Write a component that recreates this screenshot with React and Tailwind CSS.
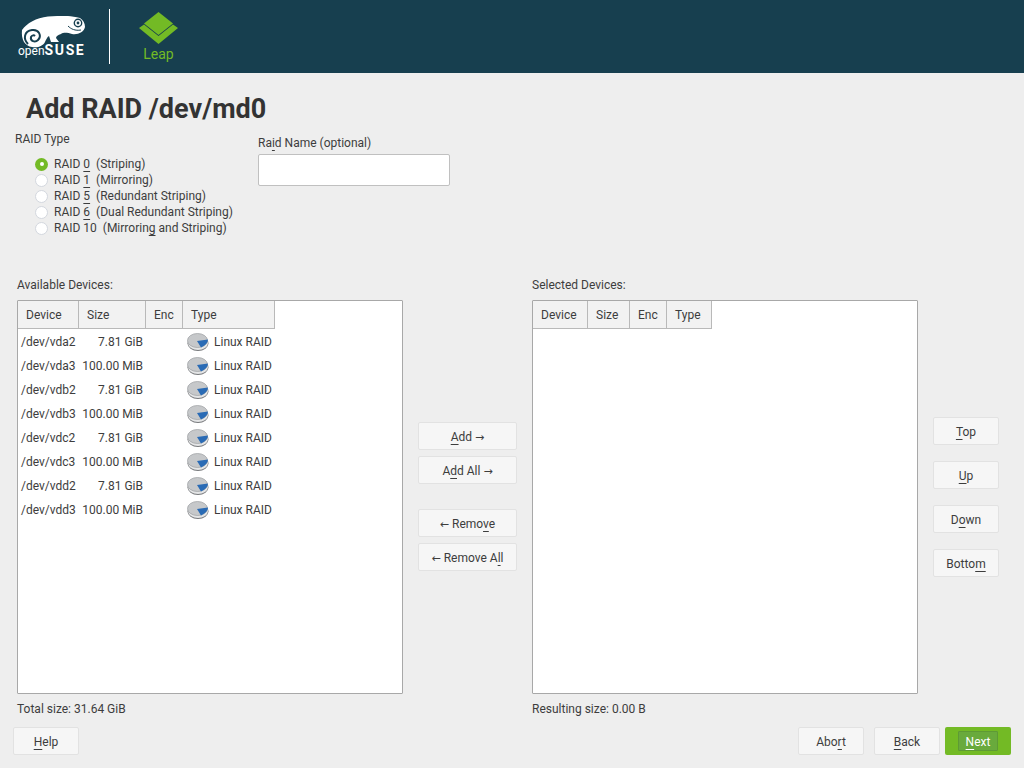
const devices = [
  ["/dev/vda2", "7.81 GiB"],
  ["/dev/vda3", "100.00 MiB"],
  ["/dev/vdb2", "7.81 GiB"],
  ["/dev/vdb3", "100.00 MiB"],
  ["/dev/vdc2", "7.81 GiB"],
  ["/dev/vdc3", "100.00 MiB"],
  ["/dev/vdd2", "7.81 GiB"],
  ["/dev/vdd3", "100.00 MiB"],
];

const raidTypes = [
  { before: "RAID ", key: "0", after: "  (Striping)", checked: true },
  { before: "RAID ", key: "1", after: "  (Mirroring)" },
  { before: "RAID ", key: "5", after: "  (Redundant Striping)" },
  { before: "RAID ", key: "6", after: "  (Dual Redundant Striping)" },
  { before: "RAID 10  (Mirrorin", key: "g", after: " and Striping)" },
];

const U = ({ children }) => (
  <span className="underline decoration-1 underline-offset-[3px] [text-decoration-skip-ink:none]">{children}</span>
);

const Arrow = ({ children }) => (
  <span className="font-['DejaVu_Sans',sans-serif] text-[11px]">{children}</span>
);

const Btn = ({ className = "pt-px", children }) => (
  <button className={`h-[28px] rounded-[2px] border border-[#e2e2e2] bg-[#f6f6f6] text-[12px] text-[#3d3d3d] whitespace-pre ${className}`}>
    {children}
  </button>
);

const DiskIcon = () => (
  <svg width="22" height="18" viewBox="0 0 22 18" className="shrink-0">
    <ellipse cx="11" cy="10.5" rx="10.5" ry="7.5" fill="#77797c" />
    <ellipse cx="11" cy="10" rx="10" ry="7" fill="#e4e5e6" />
    <ellipse cx="10.5" cy="7.5" rx="10" ry="7" fill="#c6c8ca" stroke="#9b9ea1" strokeWidth="0.7" />
    <path d="M10 8 L21 6.5 Q21 11 14 14.5 Z" fill="#2a6bb5" />
  </svg>
);

const HeaderCell = ({ className, children }) => (
  <div className={`flex h-full items-center border-r border-[#b9b9b9] pl-[8px] ${className}`}>{children}</div>
);

const DeviceTable = ({ widths, rows }) => (
  <div className="h-[394px] w-[386px] rounded-[1px] border border-[#a8a8a8] bg-white text-[12px] text-[#3d3d3d]">
    <div className="flex h-[28px] w-fit border-b border-[#b9b9b9] bg-[#f2f2f2]">
      <HeaderCell className={widths[0]}>Device</HeaderCell>
      <HeaderCell className={widths[1]}>Size</HeaderCell>
      <HeaderCell className={widths[2]}>Enc</HeaderCell>
      <HeaderCell className={widths[3]}>Type</HeaderCell>
    </div>
    <div className="pt-px">
      {rows.map(([dev, size]) => (
        <div key={dev} className="flex h-[24px] items-center">
          <div className="w-[61px] pl-[3px]">{dev}</div>
          <div className="w-[64px] whitespace-nowrap text-right">{size}</div>
          <div className="ml-[44px] flex items-center">
            <DiskIcon />
            <span className="ml-[5px]">Linux RAID</span>
          </div>
        </div>
      ))}
    </div>
  </div>
);

export default function App() {
  return (
    <div className="flex h-[768px] w-[1024px] flex-col overflow-hidden bg-[#eeeeee] font-['Roboto',sans-serif] text-[12px] text-[#3d3d3d]">
      <header className="flex h-[73px] shrink-0 items-start bg-[#173f4f]">
        <div className="relative ml-[18px] h-[73px] w-[70px]">
          <svg width="70" height="36" viewBox="0 0 70 36" className="absolute left-0 top-[15px]">
            <path
              d="M4 15 C9 8 18 3 30 1.5 C36 1 42 1 50 1 C53 1.5 58 1.5 62 3 C65 5 67 8 67 12 C66 17 60 20 54 19 C50 18 46 17 43 19 C40 20 38 21 38 23 L41 27 L33 27 L31 21 C29 22 28 25 27 27 C25 31 20 33 14 32 C7 31 3 25 4 15 Z"
              fill="#ffffff"
            />
            <path d="M10 29 C5 24 6 16 14 15 C21 14 24 21 20 25 C17 28 12 26 13 22 C14 20 16 20 17 21" fill="none" stroke="#173f4f" strokeWidth="2" />
            <circle cx="60" cy="8" r="4.4" fill="#173f4f" />
            <circle cx="60" cy="8" r="3" fill="#ffffff" />
            <circle cx="60" cy="8" r="1.4" fill="#173f4f" />
            <path d="M50 11 C53 14 57 16 63 15" fill="none" stroke="#173f4f" strokeWidth="1" />
          </svg>
          <div className="absolute left-0 top-[43px] whitespace-nowrap text-[12px] leading-[14px] text-white">
            open<span className="text-[14px] font-bold tracking-[1.6px]">SUSE</span>
          </div>
        </div>
        <div className="ml-[21px] mt-[9px] h-[55px] w-px bg-white" />
        <div className="ml-[28px] flex w-[41px] flex-col items-center pt-[11px]">
          <svg width="41" height="34" viewBox="0 0 41 34">
            <path d="M20.5 1 L35 12.5 L20.5 24 L6 12.5 Z" fill="#73ba25" />
            <path d="M1 17 L6 13.5 L20.5 25 L35 13.5 L40 17 L20.5 33 Z" fill="#73ba25" />
          </svg>
          <div className="text-[14px] leading-[18px] text-[#73ba25]">Leap</div>
        </div>
      </header>

      <h1 className="ml-[26px] mt-[18px] text-[27px] font-bold leading-[36px] text-[#333333]">Add RAID /dev/md0</h1>

      <div className="ml-[15px] mt-[4px] flex h-[147px] items-start">
        <div className="w-[243px]">
          <div className="leading-[16px]">RAID Type</div>
          <div className="ml-[20px] mt-[9px]">
            {raidTypes.map((r) => (
              <div key={r.key} className="flex h-[16px] items-center whitespace-pre">
                {r.checked ? (
                  <span className="flex h-[13px] w-[13px] items-center justify-center rounded-full bg-[#73ba25]">
                    <span className="h-[4px] w-[4px] rounded-full bg-white" />
                  </span>
                ) : (
                  <span className="h-[13px] w-[13px] rounded-full border border-[#d3d7de] bg-white" />
                )}
                <span className="ml-[6px]">
                  {r.before}
                  <U>{r.key}</U>
                  {r.after}
                </span>
              </div>
            ))}
          </div>
        </div>
        <div className="mt-[4px]">
          <div className="leading-[16px]">
            Ra<U>i</U>d Name (optional)
          </div>
          <input className="mt-[3px] block h-[32px] w-[192px] rounded-[2px] border border-[#c0c0c0] bg-white" />
        </div>
      </div>

      <div className="ml-[17px] flex gap-[15px]">
        <div>
          <div className="h-[15px] leading-[15px]">Available Devices:</div>
          <div className="mt-[7px]">
            <DeviceTable widths={["w-[61px]", "w-[67px]", "w-[37px]", "w-[92px]"]} rows={devices} />
          </div>
          <div className="mt-[8px] leading-[15px]">Total size: 31.64 GiB</div>
        </div>

        <div className="flex w-[99px] flex-col pt-[144px]">
          <Btn className="pt-[3px]">
            <U>A</U>dd <Arrow>→</Arrow>
          </Btn>
          <Btn className="mt-[6px] pt-[3px]">
            A<U>d</U>d All <Arrow>→</Arrow>
          </Btn>
          <Btn className="mt-[25px] pt-[3px]">
            <Arrow>←</Arrow> Remo<U>v</U>e
          </Btn>
          <Btn className="mt-[6px] pt-[3px]">
            <Arrow>←</Arrow> Remove A<U>l</U>l
          </Btn>
        </div>

        <div>
          <div className="h-[15px] leading-[15px]">Selected Devices:</div>
          <div className="mt-[7px]">
            <DeviceTable widths={["w-[55px]", "w-[42px]", "w-[37px]", "w-[45px]"]} rows={[]} />
          </div>
          <div className="mt-[8px] leading-[15px]">Resulting size: 0.00 B</div>
        </div>

        <div className="flex w-[66px] flex-col gap-[16px] pt-[139px]">
          <Btn>
            <U>T</U>op
          </Btn>
          <Btn>
            <U>U</U>p
          </Btn>
          <Btn>
            D<U>o</U>wn
          </Btn>
          <Btn>
            Botto<U>m</U>
          </Btn>
        </div>
      </div>

      <div className="ml-[13px] mt-[10px] flex w-[998px] items-center">
        <Btn className="w-[66px] pt-px">
          <U>H</U>elp
        </Btn>
        <Btn className="ml-auto w-[66px] pt-px">
          Abo<U>r</U>t
        </Btn>
        <Btn className="ml-[10px] w-[66px] pt-px">
          <U>B</U>ack
        </Btn>
        <button className="ml-[5px] flex h-[28px] w-[66px] items-center justify-center rounded-[2px] bg-[#73ba25] text-[12px] text-white">
          <span className="flex h-[20px] w-[40px] items-center justify-center rounded-[1px] border border-[#5e9a35] bg-[#69aa3c] pt-px">
            <U>N</U>ext
          </span>
        </button>
      </div>
    </div>
  );
}
